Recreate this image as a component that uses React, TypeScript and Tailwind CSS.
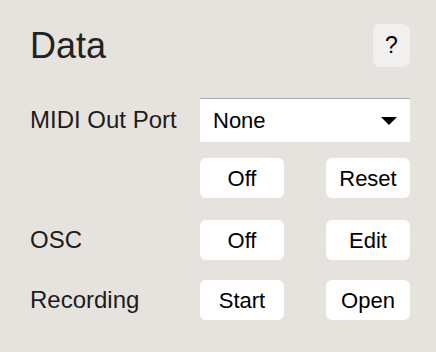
const btn =
  "w-[84px] h-[40px] rounded-[6px] bg-white text-[22px] text-black flex items-center justify-center";

function Row({ label, className, children }: { label?: string; className?: string; children: React.ReactNode }) {
  return (
    <div className={`flex items-center ${className ?? ""}`}>
      <div className="w-[170px] text-[24px] text-[#1c1c1c] leading-none">{label}</div>
      {children}
    </div>
  );
}

export default function App() {
  return (
    <div className="w-[436px] h-[352px] bg-[#e6e3de] pl-[30px] pr-[26px] pt-[24px] font-[family-name:Liberation_Sans,Arial,sans-serif]">
      <div className="flex items-center justify-between h-[43px]">
        <h2 className="text-[36px] leading-none text-[#222]">Data</h2>
        <button className="w-[37px] h-[43px] rounded-[7px] bg-[#f1f0ee] text-[23px] text-black flex items-center justify-center">
          ?
        </button>
      </div>

      <Row label="MIDI Out Port" className="mt-[31px]">
        <div className="w-[210px] h-[44px] bg-white border-t border-[#a9a9a9] flex items-center justify-between pl-[13px] pr-[13px]">
          <span className="text-[22px] text-black">None</span>
          <svg width="16" height="8" viewBox="0 0 16 8" className="mt-[1px]">
            <path d="M0 0 H16 L8 8 Z" fill="#000" />
          </svg>
        </div>
      </Row>

      <Row className="mt-[16px]">
        <div className="flex gap-[42px]">
          <button className={btn}>Off</button>
          <button className={btn}>Reset</button>
        </div>
      </Row>

      <Row label="OSC" className="mt-[22px]">
        <div className="flex gap-[42px]">
          <button className={btn}>Off</button>
          <button className={btn}>Edit</button>
        </div>
      </Row>

      <Row label="Recording" className="mt-[20px]">
        <div className="flex gap-[42px]">
          <button className={btn}>Start</button>
          <button className={btn}>Open</button>
        </div>
      </Row>
    </div>
  );
}
